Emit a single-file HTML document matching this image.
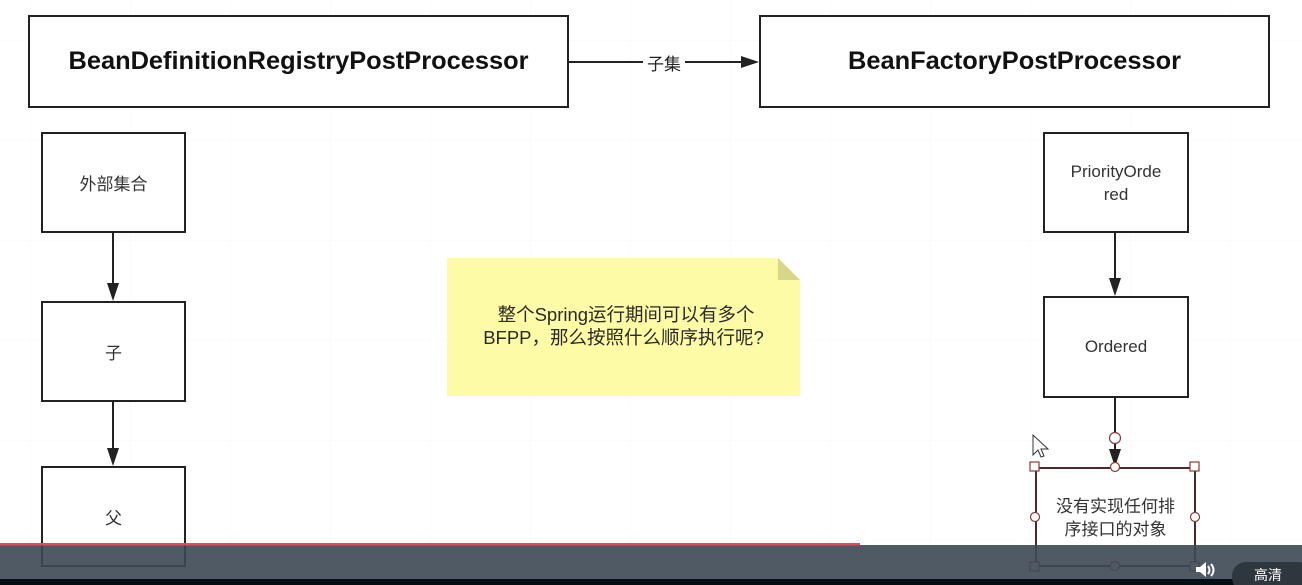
<!DOCTYPE html>
<html><head><meta charset="utf-8"><style>
body{margin:0;width:1302px;height:585px;position:relative;overflow:hidden;background:#fff;font-family:"Liberation Sans","Noto Sans CJK SC",sans-serif;}
.b{position:absolute;border:2px solid #222;box-sizing:border-box;display:flex;align-items:center;justify-content:center;text-align:center;color:#333;font-size:17px;background:#fff;}
.big{font-weight:bold;font-size:25.4px;color:#111;}
</style></head><body>
<svg style="position:absolute;left:0;top:0" width="1302" height="585">
<defs><pattern id="g" width="100" height="100" patternUnits="userSpaceOnUse" x="30" y="40"><path d="M0 0H100M0 0V100" stroke="#f7f7f7" stroke-width="1" fill="none"/></pattern></defs>
<rect width="1302" height="585" fill="url(#g)"/>
<g stroke="#222" stroke-width="2">
<line x1="568" y1="62" x2="745" y2="62"/>
<line x1="113" y1="232" x2="113" y2="288"/>
<line x1="113" y1="401" x2="113" y2="453"/>
<line x1="1115" y1="232" x2="1115" y2="283"/>
<line x1="1115" y1="397" x2="1115" y2="454"/>
</g>
<g fill="#222">
<polygon points="759,62 741,56 741,68"/>
<polygon points="113,301 107,283 119,283"/>
<polygon points="113,466 107,448 119,448"/>
<polygon points="1115,296 1109,278 1121,278"/>
<polygon points="1115,467 1109,449 1121,449"/>
</g>
<rect x="643" y="52" width="42" height="20" fill="#fff"/>
<text x="664" y="70" font-size="17" text-anchor="middle" fill="#222" font-family="Liberation Sans,Noto Sans CJK SC,sans-serif">子集</text>
<polygon points="447,258 778,258 800,280 800,396 447,396" fill="#fefba6"/>
<polygon points="778,258 800,280 778,280" fill="#d9d58a"/>
</svg>
<div class="b big" style="left:28px;top:15px;width:541px;height:93px">BeanDefinitionRegistryPostProcessor</div>
<div class="b big" style="left:759px;top:15px;width:511px;height:93px">BeanFactoryPostProcessor</div>
<div class="b" style="left:41px;top:132px;width:145px;height:101px">外部集合</div>
<div class="b" style="left:41px;top:301px;width:145px;height:101px">子</div>
<div class="b" style="left:41px;top:466px;width:145px;height:101px">父</div>
<div class="b" style="left:1043px;top:132px;width:146px;height:101px;line-height:23px">PriorityOrde<br>red</div>
<div class="b" style="left:1043px;top:296px;width:146px;height:102px">Ordered</div>
<div class="b" style="left:1035px;top:467px;width:161px;height:100px;border-color:#4a2a2a;line-height:23px;padding-top:2px">没有实现任何排<br>序接口的对象</div>
<div style="position:absolute;left:447px;top:303px;width:353px;text-align:center;font-size:18.5px;color:#2a2a2a;line-height:23px">&nbsp;整个Spring运行期间可以有多个<br>BFPP，那么按照什么顺序执行呢?</div>
<svg style="position:absolute;left:0;top:0" width="1302" height="585">
<g fill="#fff" stroke="#8a3a3a" stroke-width="1.2">
<circle cx="1115" cy="438" r="5.5"/>
<rect x="1030" y="462" width="9" height="9"/><rect x="1190" y="462" width="9" height="9"/>
<circle cx="1115" cy="467" r="4.5"/><circle cx="1035" cy="517" r="4.5"/><circle cx="1195" cy="517" r="4.5"/>
<rect x="1030" y="562" width="9" height="9"/><rect x="1190" y="562" width="9" height="9"/><circle cx="1115" cy="566" r="4.5"/>
</g>
<path d="M1033 435 L1033 455 L1038 450 L1041 457 L1044 456 L1041 449 L1048 449 Z" fill="#fff" stroke="#333" stroke-width="1"/>
<rect x="0" y="545" width="1302" height="34" fill="#3d4853" fill-opacity="0.9"/>
<rect x="0" y="543" width="860" height="2.5" fill="#e04a5a"/>
<rect x="0" y="579" width="1302" height="6" fill="#050d14"/>
<rect x="1232" y="562" width="80" height="30" rx="14" fill="#2e363e"/>
<text x="1254" y="580" font-size="14" fill="#fff" font-family="Liberation Sans,Noto Sans CJK SC,sans-serif">高清</text>
<path d="M1196 567h4l6-5v15l-6-5h-4z" fill="#fff"/>
<path d="M1208 566q3 4 0 8M1211 564q5 6 0 12" stroke="#fff" stroke-width="2" fill="none"/>
</svg>
</body></html>
